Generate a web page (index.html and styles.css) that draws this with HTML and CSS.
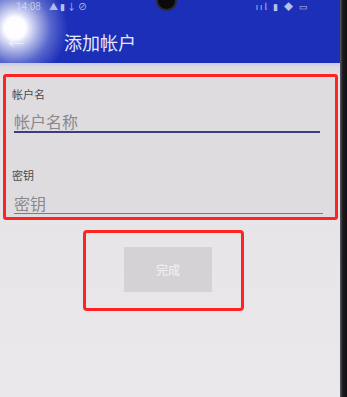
FILE: index.html
```html
<!DOCTYPE html>
<html lang="zh">
<head>
<meta charset="utf-8">
<title>添加帐户</title>
<link rel="stylesheet" href="styles.css">
</head>
<body>
<div class="phone">
  <div class="screen">
    <header class="appbar">
      <div class="status">
        <span class="time">14:08</span>
        <span class="sicons">▲ ▮ ↓ ⊘</span>
        <span class="spacer"></span>
        <span class="ricons">ııl ▮ ◆ ▭</span>
      </div>
      <div class="titlerow">
        <span class="back">←</span>
        <span class="title">添加帐户</span>
      </div>
      <div class="glare"></div>
      <div class="camera"></div>
    </header>
    <div class="strip"></div>
    <main class="content">
      <section class="form-box">
        <label class="label">帐户名</label>
        <div class="field field-active">帐户名称</div>
        <label class="label label-second">密钥</label>
        <div class="field field-idle">密钥</div>
      </section>
      <section class="btn-box">
        <div class="btn">完成</div>
      </section>
    </main>
  </div>
  <div class="bezel"></div>
</div>
</body>
</html>
```
FILE: styles.css
```css
html, body {
  margin: 0;
  padding: 0;
  width: 347px;
  height: 397px;
  overflow: hidden;
  background: #1e1e22;
  font-family: "Noto Sans CJK SC", "Noto Sans", sans-serif;
}
.phone {
  display: flex;
  width: 347px;
  height: 397px;
}
.screen {
  width: 340px;
  height: 397px;
  background: linear-gradient(180deg, #e3e0e4 0%, #e8e5e9 60%, #ebe8ec 100%);
  display: flex;
  flex-direction: column;
}
.bezel {
  flex: 1;
  background: linear-gradient(90deg, #5a5a60 0%, #1b1b1f 40%, #101014 100%);
}
.appbar {
  position: relative;
  height: 63px;
  background: #1c2fb9;
  overflow: hidden;
  display: flex;
  flex-direction: column;
}
.status {
  display: flex;
  align-items: center;
  height: 12px;
  padding: 0 30px 0 16px;
  color: #b8c0ee;
  font-size: 10px;
  line-height: 11px;
}
.time { font-family: "Roboto", sans-serif; }
.sicons { margin-left: 8px; font-size: 9px; }
.spacer { flex: 1; }
.ricons { font-size: 9px; letter-spacing: 2px; }
.titlerow {
  display: flex;
  align-items: center;
  height: 40px;
  margin-top: 10px;
}
.back {
  width: 64px;
  color: #d8dcf4;
  font-size: 16px;
  padding-left: 8px;
  box-sizing: border-box;
}
.title {
  color: #e6e8f8;
  font-size: 18px;
  line-height: 22px;
}
.glare {
  position: absolute;
  left: -40px;
  top: -27px;
  width: 110px;
  height: 110px;
  border-radius: 50%;
  background: radial-gradient(circle at 50% 50%, #ffffff 0%, #fdfcff 14%, rgba(240,240,252,0.92) 19%, rgba(212,216,242,0.75) 30%, rgba(160,170,228,0.45) 46%, rgba(28,47,185,0) 68%);
}
.camera {
  position: absolute;
  left: 158px;
  top: -8px;
  width: 17px;
  height: 17px;
  border-radius: 50%;
  background: #0a0a0c;
  box-shadow: 0 0 0 2px #2a2a30;
}
.strip {
  height: 11px;
  background: linear-gradient(180deg, #c8cbe2 0%, #dcdbe3 40%, #e0dde2 100%);
}
.content {
  display: flex;
  flex-direction: column;
}
.form-box {
  margin-left: 3px;
  width: 335px;
  box-sizing: border-box;
  border: 3px solid #ff2424;
  border-radius: 3px;
  padding: 11px 15px 3px 6px;
  background: #dfdce0;
  display: flex;
  flex-direction: column;
}
.label {
  font-size: 11px;
  line-height: 12px;
  color: #4a4a50;
}
.label-second {
  margin-top: 36px;
}
.field {
  margin-top: 11px;
  margin-left: 2px;
  font-size: 16px;
  line-height: 20px;
  color: #8a888e;
}
.field-active {
  border-bottom: 2px solid #3c3c86;
}
.field-idle {
  margin-top: 12px;
  margin-right: -3px;
  border-bottom: 1px solid #7a7a88;
}
.btn-box {
  margin-top: 10px;
  margin-left: 83px;
  width: 161px;
  box-sizing: border-box;
  border: 3px solid #ff2424;
  border-radius: 4px;
  padding: 14px 29px 16px 38px;
  display: flex;
}
.btn {
  width: 88px;
  height: 45px;
  background: #d5d2d6;
  color: #eeedf0;
  font-size: 12px;
  font-weight: 500;
  display: flex;
  align-items: center;
  justify-content: center;
}
```
